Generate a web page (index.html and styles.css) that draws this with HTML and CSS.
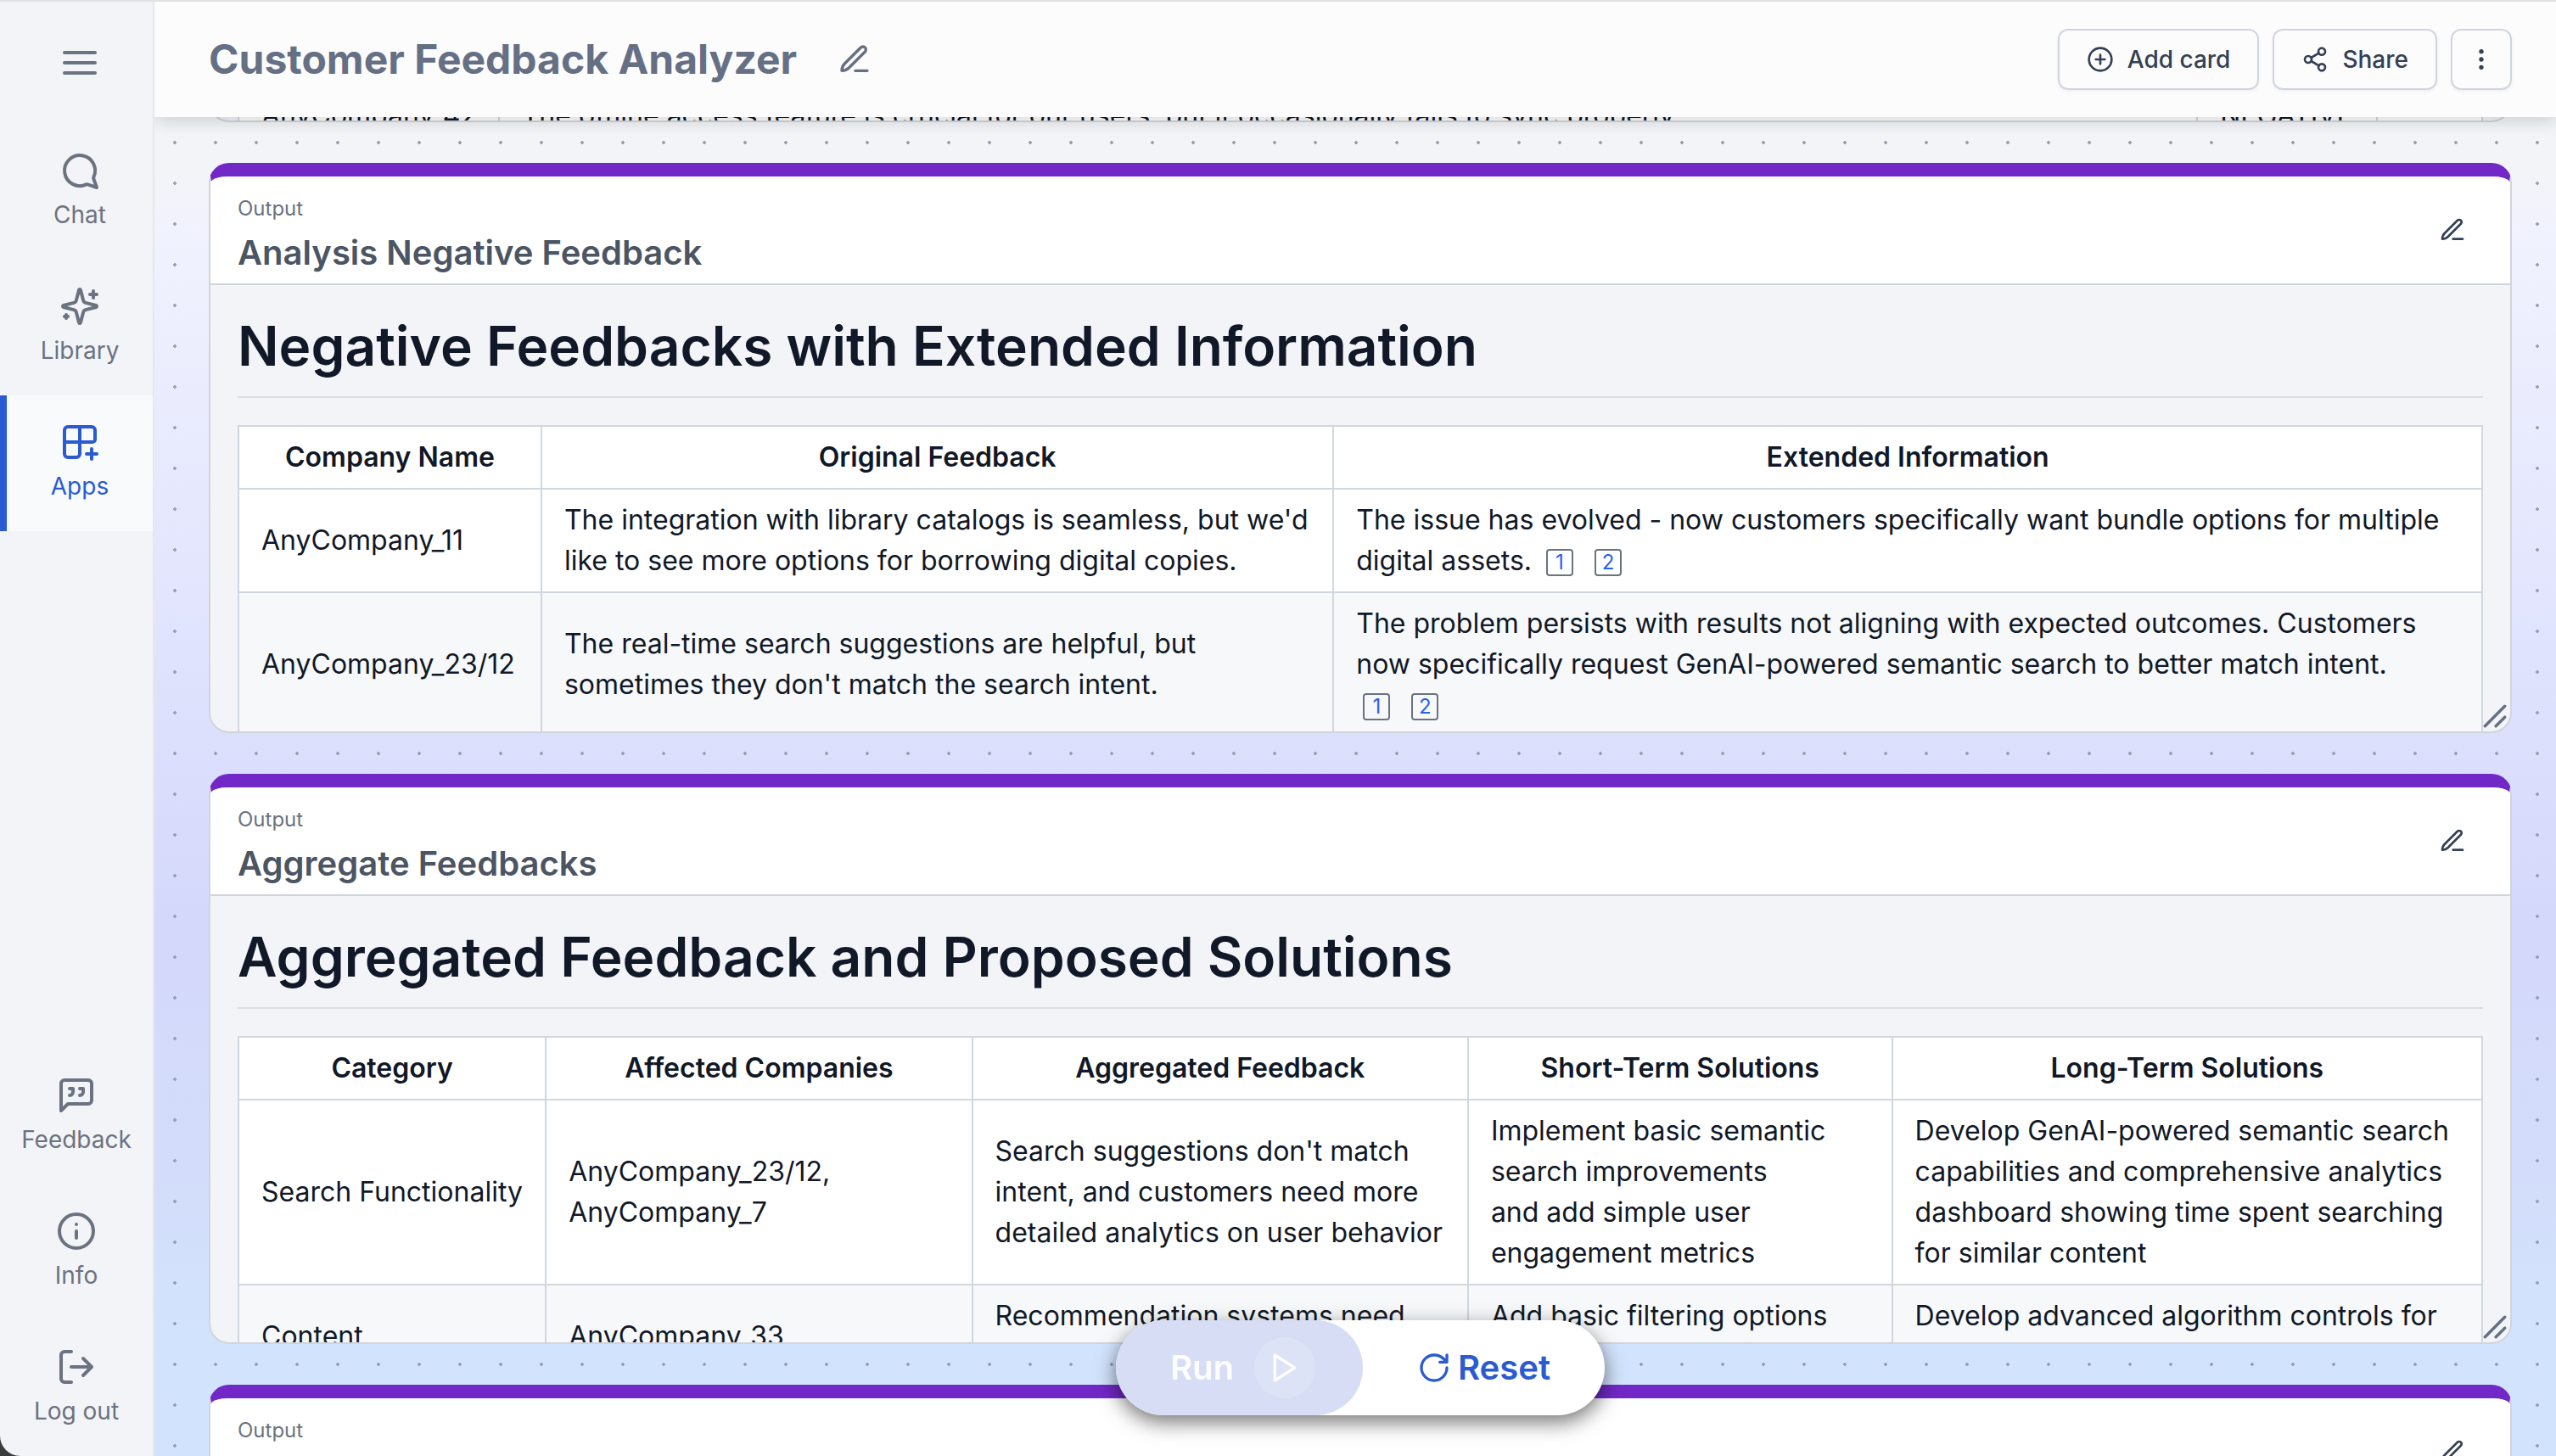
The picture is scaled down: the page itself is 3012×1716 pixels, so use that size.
FILE: index.html
```html
<!DOCTYPE html>
<html lang="en">
<head>
<meta charset="utf-8">
<meta name="viewport" content="width=device-width, initial-scale=1">
<title>Customer Feedback Analyzer</title>
<link rel="stylesheet" href="styles.css">
</head>
<body>
<svg class="sprite" aria-hidden="true">
  <symbol id="pen" viewBox="0 0 24 24"><path d="M12.5 20H21M16.4 3.6a2.1 2.1 0 0 1 3 3L8 18c-1.5 1.5-2.500 2-5 2 0-2.200.5-3.500 2-5Z"/></symbol>
  <symbol id="grip" viewBox="0 0 24 24"><path d="M2 22 22 2M13 22l9-9"/></symbol>
</svg>
<div class="app">
  <nav class="sidebar" aria-label="Main">
    <button class="menu-toggle" type="button" aria-label="Toggle menu"><svg class="icon icon-lg" viewBox="0 0 24 24"><path d="M3 6h18M3 12h18M3 18h18"/></svg></button>
    <a class="nav-item" href="#chat"><svg class="icon icon-lg" viewBox="0 0 24 24"><path d="M15.800 20.200A9 9 0 1 1 20.200 15.800 1.500 1.500 0 0 0 20.200 17L22 22l-5-1.700a1.500 1.500 0 0 0-1.200-.1Z"/></svg>Chat</a>
    <a class="nav-item" href="#library"><svg class="icon icon-lg" viewBox="0 0 24 24"><path d="M9.937 15.5A2 2 0 0 0 8.5 14.063l-6.135-1.582a.5.5 0 0 1 0-.962L8.5 9.936A2 2 0 0 0 9.937 8.5l1.582-6.135a.5.5 0 0 1 .963 0L14.063 8.5A2 2 0 0 0 15.5 9.937l6.135 1.581a.5.5 0 0 1 0 .964L15.5 14.063a2 2 0 0 0-1.437 1.437l-1.582 6.135a.5.5 0 0 1-.963 0zM20 3v4M22 5h-4M4 17v2M5 18H3"/></svg>Library</a>
    <a class="nav-item nav-item-active" href="#apps" aria-current="page"><svg class="icon icon-lg" viewBox="0 0 24 24"><path d="M12 3v16a2 2 0 0 1-2 2H5a2 2 0 0 1-2-2V5a2 2 0 0 1 2-2h14a2 2 0 0 1 2 2v5.500a1.500 1.500 0 0 1-1.500 1.500H3M19 16v6M16 19h6"/></svg>Apps</a>
    <div class="nav-footer">
      <a class="nav-link" href="#feedback"><svg class="icon icon-lg" viewBox="0 0 24 24"><path d="M21 15a2 2 0 0 1-2 2H7l-4 4V5a2 2 0 0 1 2-2h14a2 2 0 0 1 2 2zM8 12a2 2 0 0 0 2-2V8H8M14 12a2 2 0 0 0 2-2V8h-2"/></svg>Feedback</a>
      <a class="nav-link" href="#info"><svg class="icon icon-lg" viewBox="0 0 24 24"><circle cx="12" cy="12" r="10"/><path d="M12 16v-4M12 8h.01"/></svg>Info</a>
      <a class="nav-link" href="#logout"><svg class="icon icon-lg" viewBox="0 0 24 24"><path d="M9 21H5a2 2 0 0 1-2-2V5a2 2 0 0 1 2-2h4M16 17l5-5-5-5M21 12H9"/></svg>Log out</a>
    </div>
  </nav>

  <main class="main">
    <header class="topbar">
      <h1 class="app-title">Customer Feedback Analyzer</h1>
      <button class="icon-button title-edit" type="button" aria-label="Edit title"><svg class="icon icon-md"><use href="#pen"/></svg></button>
      <div class="actions">
        <button class="button" type="button"><svg class="icon icon-sm" viewBox="0 0 24 24"><circle cx="12" cy="12" r="10"/><path d="M8 12h8M12 8v8"/></svg>Add card</button>
        <button class="button" type="button"><svg class="icon icon-sm" viewBox="0 0 24 24"><circle cx="18" cy="5" r="3"/><circle cx="6" cy="12" r="3"/><circle cx="18" cy="19" r="3"/><path d="m8.600 13.500 6.800 4M15.400 6.500l-6.800 4"/></svg>Share</button>
        <button class="button button-square" type="button" aria-label="More options"><svg class="icon icon-sm" viewBox="0 0 24 24"><circle cx="12" cy="5" r="1"/><circle cx="12" cy="12" r="1"/><circle cx="12" cy="19" r="1"/></svg></button>
      </div>
    </header>

    <div class="canvas">
      <section class="card card-scrolled">
        <div class="card-body">
          <table class="data-table">
            <colgroup><col class="w-company"><col class="w-text"><col class="w-label"><col></colgroup>
            <tbody><tr><td>AnyCompany_42</td><td>The offline access feature is crucial for our users, but it occasionally fails to sync properly.</td><td>NEGATIVE</td><td></td></tr></tbody>
          </table>
        </div>
      </section>

      <section class="card">
        <div class="card-header">
          <div class="card-heading"><p class="card-kind">Output</p><h2 class="card-title">Analysis Negative Feedback</h2></div>
          <button class="icon-button card-edit" type="button" aria-label="Edit card"><svg class="icon icon-sm"><use href="#pen"/></svg></button>
        </div>
        <div class="card-body">
          <h3 class="doc-title">Negative Feedbacks with Extended Information</h3>
          <table class="data-table">
            <colgroup><col class="w-name"><col class="w-original"><col></colgroup>
            <thead><tr><th>Company Name</th><th>Original Feedback</th><th>Extended Information</th></tr></thead>
            <tbody>
              <tr><td>AnyCompany_11</td><td>The integration with library catalogs is seamless, but we'd like to see more options for borrowing digital copies.</td><td>The issue has evolved - now customers specifically want bundle options for multiple digital assets. <span class="cites"><a class="cite" href="#source-1">1</a> <a class="cite" href="#source-2">2</a></span></td></tr>
              <tr><td>AnyCompany_23/12</td><td>The real-time search suggestions are helpful, but sometimes they don't match the search intent.</td><td>The problem persists with results not aligning with expected outcomes. Customers now specifically request GenAI-powered semantic search to better match intent. <span class="cites"><a class="cite" href="#source-1">1</a> <a class="cite" href="#source-2">2</a></span></td></tr>
            </tbody>
          </table>
        </div>
        <svg class="icon grip"><use href="#grip"/></svg>
      </section>

      <section class="card">
        <div class="card-header">
          <div class="card-heading"><p class="card-kind">Output</p><h2 class="card-title">Aggregate Feedbacks</h2></div>
          <button class="icon-button card-edit" type="button" aria-label="Edit card"><svg class="icon icon-sm"><use href="#pen"/></svg></button>
        </div>
        <div class="card-body">
          <h3 class="doc-title">Aggregated Feedback and Proposed Solutions</h3>
          <table class="data-table">
            <colgroup><col class="w-category"><col class="w-affected"><col class="w-aggregated"><col class="w-short"><col></colgroup>
            <thead><tr><th>Category</th><th>Affected Companies</th><th>Aggregated Feedback</th><th>Short-Term Solutions</th><th>Long-Term Solutions</th></tr></thead>
            <tbody>
              <tr><td>Search Functionality</td><td>AnyCompany_23/12, AnyCompany_7</td><td>Search suggestions don't match intent, and customers need more detailed analytics on user behavior</td><td>Implement basic semantic search improvements<br>and add simple user engagement metrics</td><td>Develop GenAI-powered semantic search capabilities and comprehensive analytics dashboard showing time spent searching for similar content</td></tr>
              <tr><td>Content Recommendations</td><td>AnyCompany_33, AnyCompany_15</td><td>Recommendation systems need finer control and more relevant results for each user</td><td>Add basic filtering options and simple preference settings for every user</td><td>Develop advanced algorithm controls for personalized recommendations with detailed preference settings for users</td></tr>
            </tbody>
          </table>
        </div>
        <svg class="icon grip"><use href="#grip"/></svg>
      </section>

      <section class="card">
        <div class="card-header">
          <div class="card-heading"><p class="card-kind">Output</p><h2 class="card-title">Summary</h2></div>
          <button class="icon-button card-edit" type="button" aria-label="Edit card"><svg class="icon icon-sm"><use href="#pen"/></svg></button>
        </div>
      </section>
    </div>

    <div class="run-bar">
      <button class="run" type="button" disabled>Run<span class="run-icon"><svg class="icon icon-md" viewBox="0 0 24 24"><path d="m5 3 14 9-14 9z"/></svg></span></button>
      <button class="reset" type="button"><svg class="icon icon-md" viewBox="0 0 24 24"><path d="M21 12a9 9 0 1 1-9-9c2.520 0 4.930 1 6.740 2.740L21 8M21 3v5h-5"/></svg>Reset</button>
    </div>
  </main>
</div>
</body>
</html>
```
FILE: styles.css
```css
* { box-sizing: border-box; }

body {
  margin: 0;
  background: #3c3c3c;
  color: #111827;
  font-family: Inter, "Liberation Sans", sans-serif;
  font-size: 32px;
  line-height: 48px;
}

h1, h2, h3, p { margin: 0; }

button {
  padding: 0;
  border: 0;
  background: none;
  color: inherit;
  font: inherit;
}

a { color: inherit; text-decoration: none; }

.sprite { display: none; }

.app {
  display: grid;
  grid-template-columns: 182px 1fr;
  height: 100vh;
  overflow: hidden;
  border-top: 2px solid #e2e2e2;
  border-bottom-left-radius: 24px;
  background: #f3f4f8;
}

.icon {
  flex: none;
  fill: none;
  stroke: currentColor;
  stroke-width: 2;
  stroke-linecap: round;
  stroke-linejoin: round;
}
.icon-lg { width: 48px; height: 48px; }
.icon-md { width: 40px; height: 40px; }
.icon-sm { width: 32px; height: 32px; }

/* Sidebar */
.sidebar {
  display: flex;
  flex-direction: column;
  border-right: 2px solid #e5e7eb;
  color: #6b7280;
  font-size: 28px;
  line-height: 40px;
}
.menu-toggle {
  display: flex;
  align-items: center;
  justify-content: center;
  height: 144px;
  padding-left: 8px;
}
.nav-item, .nav-link {
  display: flex;
  flex-direction: column;
  align-items: center;
  gap: 8px;
  height: 160px;
  padding-top: 31px;
}
.nav-item { border-left: 8px solid transparent; }
.nav-item-active {
  border-left-color: #2b5bd0;
  background: #f9fafc;
  color: #2b5bd0;
}
.nav-footer { margin-top: auto; }

/* Top bar */
.main {
  position: relative;
  overflow: hidden;
}
.topbar {
  position: absolute;
  z-index: 2;
  top: 0;
  left: 0;
  right: 0;
  display: flex;
  align-items: center;
  height: 136px;
  padding: 0 52px 0 64px;
  background: #fcfcfd;
  box-shadow: 0 4px 20px rgba(0, 0, 0, 0.16);
}
.app-title {
  color: #667085;
  font-size: 48px;
  font-weight: 700;
  line-height: 64px;
}
.icon-button { display: flex; }
.title-edit {
  margin-left: 48px;
  color: #667085;
}
.actions {
  display: flex;
  gap: 16px;
  margin-left: auto;
}
.button {
  display: flex;
  align-items: center;
  gap: 16px;
  height: 72px;
  padding: 0 32px;
  border: 2px solid #d0d5dd;
  border-radius: 12px;
  box-shadow: 0 2px 4px rgba(16, 24, 40, 0.05);
  color: #344054;
  font-size: 28px;
  font-weight: 500;
  line-height: 40px;
}
.button-square { padding: 0 18px; }

/* Canvas and cards */
.canvas {
  display: flex;
  flex-direction: column;
  gap: 48px;
  min-height: 100%;
  padding: 0 52px 0 64px;
  background:
    radial-gradient(circle, #98a2b3 2px, transparent 2px) 0 -2px / 48px 48px,
    linear-gradient(#f3f4f6 0, #f3f4f8 200px, #f0f2fe 280px, #dfe2fd 800px, #d4d8fb 1080px, #d3dcfa 1350px, #d2e4fd 1600px);
}
.card {
  position: relative;
  flex: none;
  height: 672px;
  overflow: hidden;
  border: 2px solid #d1d5db;
  border-top: 16px solid #7228c6;
  border-radius: 24px;
  background: #f3f4f8;
}
.card-header {
  display: flex;
  align-items: center;
  justify-content: space-between;
  height: 128px;
  padding: 0 52px 0 32px;
  border-bottom: 2px solid #d1d5db;
  background: #fff;
}
.card-heading { padding-top: 14px; }
.card-kind {
  color: #6b7280;
  font-size: 24px;
  line-height: 32px;
}
.card-title {
  margin-top: 8px;
  color: #4b5563;
  font-size: 40px;
  font-weight: 600;
  line-height: 56px;
}
.card-edit { color: #344054; }
.card-body { padding: 32px; }
.card-scrolled { height: 142px; }
.card-scrolled .card-body { padding-top: 80px; }
.grip {
  position: absolute;
  right: 4px;
  bottom: 4px;
  width: 28px;
  height: 28px;
  color: #667085;
  stroke-width: 3;
}

.doc-title {
  margin-bottom: 32px;
  padding-bottom: 19px;
  border-bottom: 2px solid #d8dee4;
  font-size: 64px;
  font-weight: 600;
  line-height: 80px;
}

.data-table {
  width: 100%;
  table-layout: fixed;
  border-collapse: collapse;
}
.data-table th, .data-table td {
  padding: 12px 26px;
  border: 2px solid #d0d7de;
  background: #fff;
}
.data-table th { font-weight: 600; }
.data-table td { text-align: left; }
.data-table tbody tr:nth-child(2n) td { background: #f6f8fa; }

.w-company { width: 11.6%; }
.w-text { width: 75.7%; }
.w-label { width: 8%; }
.w-name { width: 13.5%; }
.w-original { width: 35.3%; }
.w-category { width: 13.7%; }
.w-affected { width: 19%; }
.w-aggregated { width: 22.1%; }
.w-short { width: 18.9%; }

.cites { white-space: nowrap; }
.cite {
  display: inline-block;
  width: 32px;
  height: 32px;
  margin: 0 8px;
  border: 2px solid #6b7280;
  border-radius: 4px;
  color: #2563eb;
  font-size: 24px;
  line-height: 28px;
  text-align: center;
  vertical-align: middle;
}

/* Floating run bar */
.run-bar {
  position: absolute;
  z-index: 3;
  bottom: 48px;
  left: 12px;
  right: 0;
  display: flex;
  width: fit-content;
  height: 112px;
  margin: 0 auto;
  border-radius: 56px;
  background: #fff;
  box-shadow: 0 8px 24px rgba(0, 0, 0, 0.55);
  font-size: 40px;
  font-weight: 600;
}
.run, .reset {
  display: flex;
  align-items: center;
  border-radius: 56px;
}
.run {
  gap: 24px;
  padding: 0 56px 0 64px;
  background: #d6ddf5;
  color: #fdfdfe;
}
.run-icon {
  display: flex;
  padding: 16px;
  border-radius: 50%;
  background: #dde3f6;
}
.reset {
  gap: 8px;
  padding: 0 64px;
  color: #2b5bd0;
}
```
